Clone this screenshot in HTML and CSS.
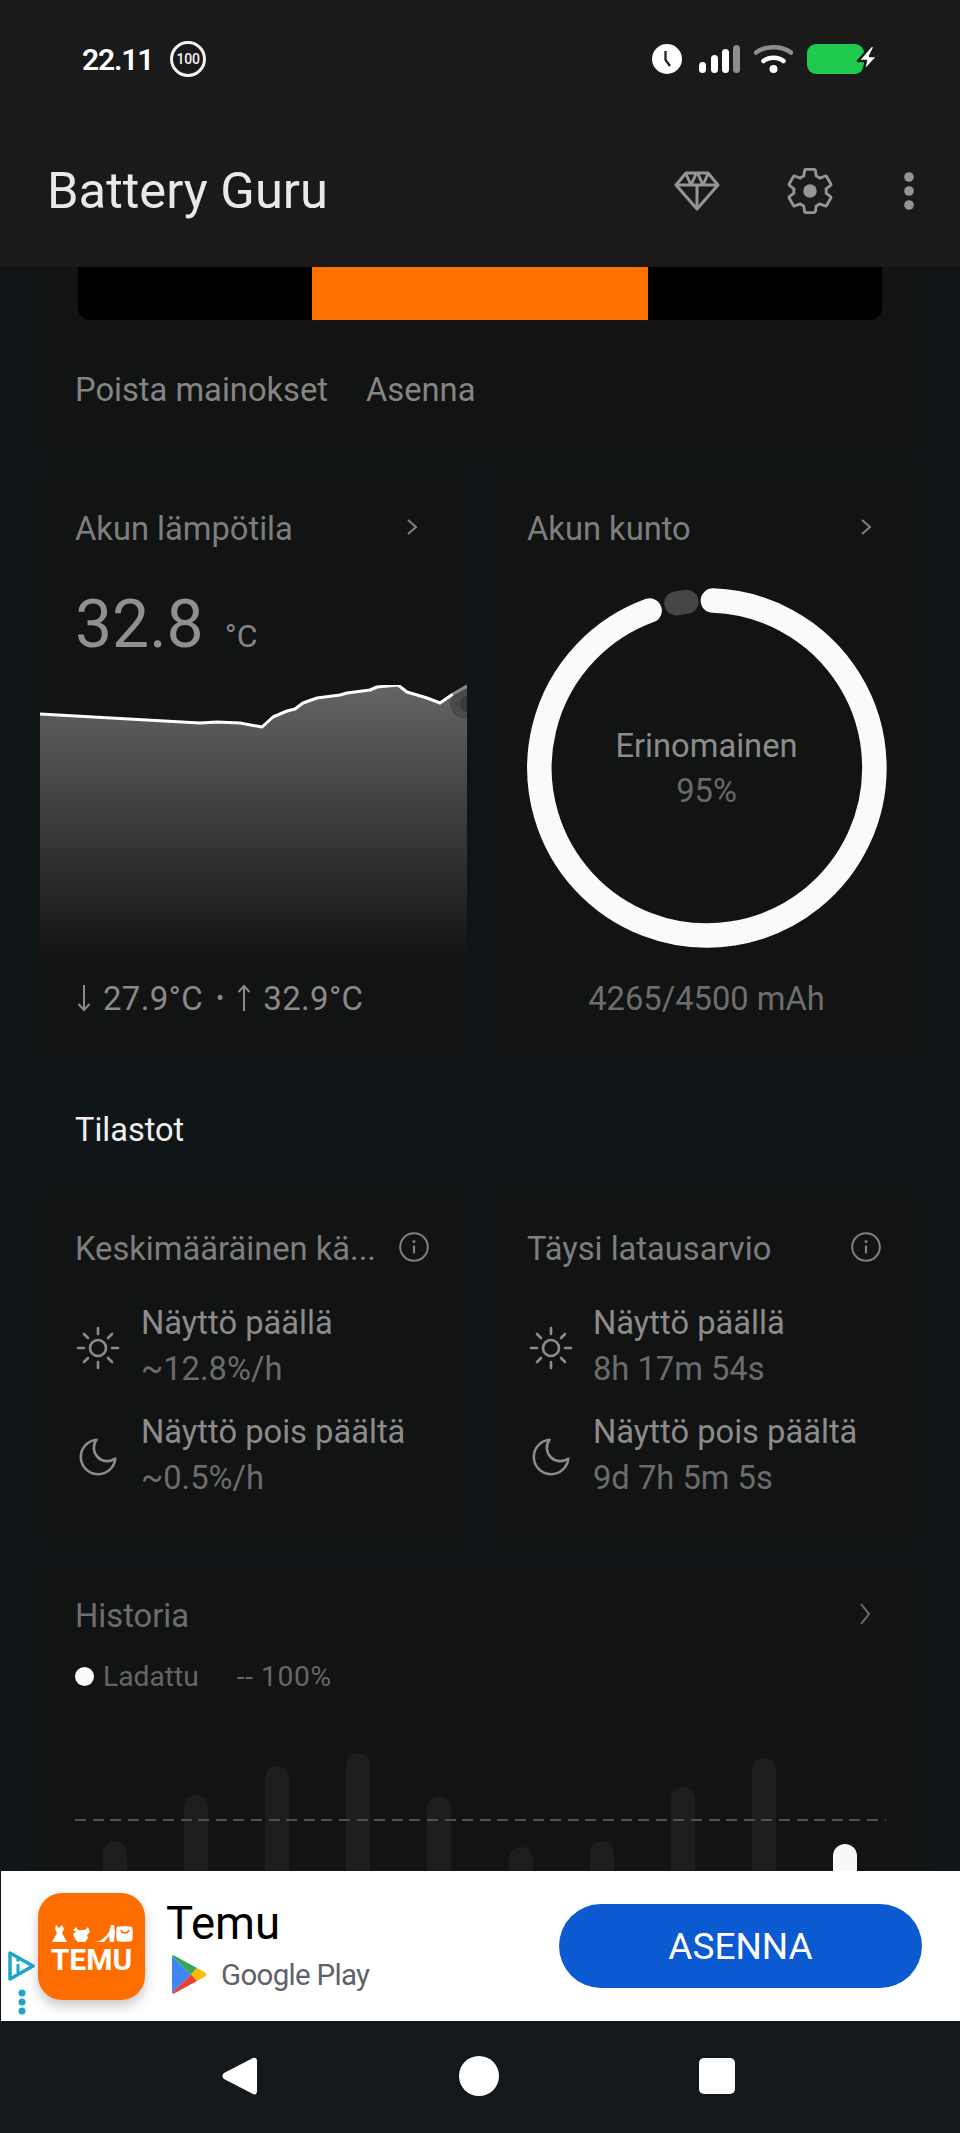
FILE: index.html
```html
<!DOCTYPE html>
<html lang="fi">
<head>
<meta charset="utf-8">
<title>Battery Guru</title>
<link rel="stylesheet" href="styles.css">
</head>
<body>
<div class="app">
  <header class="top">
    <div class="status">
      <div class="status-left">
        <span class="time">22.11</span>
        <span class="badge">100</span>
      </div>
      <div class="status-right">
        <svg class="ic-clock" width="30" height="30" viewBox="0 0 30 30"><circle cx="15" cy="15" r="15" fill="#fff"/><path d="M13.5 7v9l4.5 6" fill="none" stroke="#1a1a1a" stroke-width="2.2"/></svg>
        <svg class="ic-signal" width="41" height="28" viewBox="0 0 41 28"><rect x="0" y="17" width="7" height="11" rx="3.5" fill="#fff"/><rect x="12" y="10" width="7" height="18" rx="3.5" fill="#fff"/><rect x="23" y="4" width="7" height="24" rx="3.5" fill="#fff"/><rect x="34" y="0" width="7" height="28" rx="3.5" fill="#8e8e8e"/></svg>
        <svg class="ic-wifi" width="39" height="30" viewBox="0 0 39 30"><path d="M2 8.5C11 1.500 28 1.500 37 8.500" fill="none" stroke="#8e8e8e" stroke-width="4.500" stroke-linecap="round"/><path d="M9.500 17C14.500 12.500 24.500 12.500 29.500 17" fill="none" stroke="#fff" stroke-width="4.500" stroke-linecap="round"/><circle cx="19.500" cy="25" r="4" fill="#fff"/></svg>
        <svg class="ic-batt" width="72" height="32" viewBox="0 0 72 32"><rect x="0" y="1" width="57" height="30" rx="9" fill="#1ecb4f"/><path d="M64 3 51 18h8l-3 11 15-16h-8l5-10z" fill="#fff" stroke="#1a1a1a" stroke-width="2.500" stroke-linejoin="round"/></svg>
      </div>
    </div>
    <div class="toolbar">
      <h1 class="app-title">Battery Guru</h1>
      <div class="actions">
        <svg width="46" height="40" viewBox="0 0 46 40" fill="none" stroke="#959595" stroke-width="3" stroke-linejoin="round"><path d="M12 2h22l10 12-21 24L2 14z"/><path d="M2 14h42M17 14l5-11M29 14l-5-11M12 3l5 11M34 3l-5 11M23 14v23"/></svg>
        <svg width="54" height="54" viewBox="0 0 24 24" fill="none" stroke="#959595" stroke-width="1.250"><path d="M19.140 12.940c.04-.3.06-.61.06-.94 0-.32-.02-.64-.07-.94l2.030-1.580c.18-.14.23-.41.12-.61l-1.920-3.320c-.12-.22-.37-.29-.59-.22l-2.390.96c-.5-.38-1.030-.7-1.620-.94l-.36-2.540c-.04-.24-.24-.41-.48-.41h-3.840c-.24 0-.43.17-.47.41l-.36 2.540c-.59.24-1.130.57-1.620.94l-2.390-.96c-.22-.08-.47 0-.59.22L2.740 8.870c-.12.21-.08.47.12.61l2.030 1.580c-.05.3-.09.63-.09.94s.02.64.07.94l-2.030 1.580c-.18.14-.23.41-.12.61l1.920 3.320c.12.22.37.29.59.22l2.390-.96c.5.38 1.030.7 1.620.94l.36 2.540c.05.24.24.41.48.41h3.840c.24 0 .44-.17.47-.41l.36-2.540c.59-.24 1.130-.56 1.620-.94l2.390.96c.22.08.47 0 .59-.22l1.920-3.320c.12-.22.07-.47-.12-.61l-2.010-1.580z"/><circle cx="12" cy="12" r="3" fill="#959595" stroke="none"/></svg>
        <svg class="ic-more" width="10" height="38" viewBox="0 0 10 38" fill="#959595"><circle cx="5" cy="5" r="4.800"/><circle cx="5" cy="19" r="4.800"/><circle cx="5" cy="33" r="4.800"/></svg>
      </div>
    </div>
  </header>

  <main class="content">
    <section class="card promo">
      <div class="banner"><div class="banner-fill"></div></div>
      <div class="promo-links"><span>Poista mainokset</span><span>Asenna</span></div>
    </section>

    <div class="pair first-pair">
      <section class="card">
        <div class="card-head">
          <span class="card-title">Akun lämpötila</span>
          <svg class="chev" width="12" height="18" viewBox="0 0 12 18"><path d="M2 2l8 7-8 7" fill="none" stroke="#808080" stroke-width="2"/></svg>
        </div>
        <div class="temp"><span class="temp-num">32.8</span><span class="temp-unit">°C</span></div>
        <svg class="temp-chart" width="427" height="273" viewBox="0 0 427 273">
          <defs>
            <linearGradient id="fade" x1="0" y1="0" x2="0" y2="1"><stop offset="0" stop-color="#646464"/><stop offset="1" stop-color="#131313"/></linearGradient>
          </defs>
          <path d="M0 29L160 38L177 37L200 38L222 42L233 32L247 26L255 24L263 18L277 13L300 10L307 8L330 5L337 2L358 0L367 7L387 13L400 18L413 9L427 1V273H0z" fill="url(#fade)"/>
          <circle cx="425" cy="19" r="15" fill="#4a4a4a"/>
          <circle cx="428" cy="19" r="8" fill="#3a3a3a"/>
          <path d="M0 29L160 38L177 37L200 38L222 42L233 32L247 26L255 24L263 18L277 13L300 10L307 8L330 5L337 2L358 0L367 7L387 13L400 18L413 9" fill="none" stroke="#fff" stroke-width="3" stroke-linejoin="round"/>
          <path d="M413 9L427 1" fill="none" stroke="#8a8a8a" stroke-width="3"/>
        </svg>
        <div class="temp-range">
          <svg width="14" height="28" viewBox="0 0 14 28"><path d="M7 1v25M1.500 20L7 26l5.500-6" fill="none" stroke="#8a8a8a" stroke-width="2"/></svg>
          <span>27.9°C</span>
          <span class="sep">•</span>
          <svg width="14" height="28" viewBox="0 0 14 28"><path d="M7 27V2M1.500 8L7 2l5.500 6" fill="none" stroke="#8a8a8a" stroke-width="2"/></svg>
          <span>32.9°C</span>
        </div>
      </section>

      <section class="card">
        <div class="card-head">
          <span class="card-title">Akun kunto</span>
          <svg class="chev" width="12" height="18" viewBox="0 0 12 18"><path d="M2 2l8 7-8 7" fill="none" stroke="#808080" stroke-width="2"/></svg>
        </div>
        <div class="ring">
          <svg width="360" height="360" viewBox="0 0 360 360">
            <path d="M185.900 12.600A167.500 167.500 0 1 1 122.600 22.600" fill="none" stroke="#fafafa" stroke-width="24.500" stroke-linecap="round"/>
            <path d="M149.200 15.400A167.500 167.500 0 0 1 159.600 13.800" fill="none" stroke="#454545" stroke-width="24" stroke-linecap="round"/>
          </svg>
          <div class="ring-text">
            <span class="ring-label">Erinomainen</span>
            <span class="ring-pct">95%</span>
          </div>
        </div>
        <div class="capacity">4265/4500 mAh</div>
      </section>
    </div>

    <h2 class="section-title">Tilastot</h2>

    <div class="pair">
      <section class="card stat">
        <div class="card-head">
          <span class="card-title">Keskimääräinen kä...</span>
          <svg class="info" width="30" height="30" viewBox="0 0 30 30"><circle cx="15" cy="15" r="13.800" fill="none" stroke="#808080" stroke-width="2"/><path d="M15 13.500v8" stroke="#808080" stroke-width="2.200"/><circle cx="15" cy="9.500" r="1.500" fill="#808080"/></svg>
        </div>
        <div class="stat-row">
          <svg class="stat-ic" width="46" height="46" viewBox="0 0 46 46" fill="none" stroke="#8c8c8c" stroke-width="2.600" stroke-linecap="round"><circle cx="23" cy="23" r="8"/><path d="M23 3v6M23 37v6M3 23h6M37 23h6M9 9l4 4M33 33l4 4M9 37l4-4M33 13l4-4"/></svg>
          <div class="stat-text"><span class="stat-name">Näyttö päällä</span><span class="stat-val">~12.8%/h</span></div>
        </div>
        <div class="stat-row">
          <svg class="stat-ic" width="46" height="46" viewBox="0 0 24 24" fill="none" stroke="#8c8c8c" stroke-width="1.350" stroke-linejoin="round"><path d="M21 12.790A9 9 0 1 1 11.210 3 7 7 0 0 0 21 12.790z"/></svg>
          <div class="stat-text"><span class="stat-name">Näyttö pois päältä</span><span class="stat-val">~0.5%/h</span></div>
        </div>
      </section>

      <section class="card stat">
        <div class="card-head">
          <span class="card-title">Täysi latausarvio</span>
          <svg class="info" width="30" height="30" viewBox="0 0 30 30"><circle cx="15" cy="15" r="13.800" fill="none" stroke="#808080" stroke-width="2"/><path d="M15 13.500v8" stroke="#808080" stroke-width="2.200"/><circle cx="15" cy="9.500" r="1.500" fill="#808080"/></svg>
        </div>
        <div class="stat-row">
          <svg class="stat-ic" width="46" height="46" viewBox="0 0 46 46" fill="none" stroke="#8c8c8c" stroke-width="2.600" stroke-linecap="round"><circle cx="23" cy="23" r="8"/><path d="M23 3v6M23 37v6M3 23h6M37 23h6M9 9l4 4M33 33l4 4M9 37l4-4M33 13l4-4"/></svg>
          <div class="stat-text"><span class="stat-name">Näyttö päällä</span><span class="stat-val">8h 17m 54s</span></div>
        </div>
        <div class="stat-row">
          <svg class="stat-ic" width="46" height="46" viewBox="0 0 24 24" fill="none" stroke="#8c8c8c" stroke-width="1.350" stroke-linejoin="round"><path d="M21 12.790A9 9 0 1 1 11.210 3 7 7 0 0 0 21 12.790z"/></svg>
          <div class="stat-text"><span class="stat-name">Näyttö pois päältä</span><span class="stat-val">9d 7h 5m 5s</span></div>
        </div>
      </section>
    </div>

    <section class="card history">
      <div class="card-head hist-head">
        <span class="card-title">Historia</span>
        <svg class="chev" width="12" height="24" viewBox="0 0 12 24"><path d="M2 2l8 10-8 10" fill="none" stroke="#6e6e6e" stroke-width="2"/></svg>
      </div>
      <div class="legend"><span class="legend-dot"></span><span class="legend-name">Ladattu</span><span class="legend-val">-- 100%</span></div>
      <div class="bars">
        <div class="bar" style="height:89px"></div>
        <div class="bar" style="height:135px"></div>
        <div class="bar" style="height:164px"></div>
        <div class="bar" style="height:177px"></div>
        <div class="bar" style="height:134px"></div>
        <div class="bar" style="height:83px"></div>
        <div class="bar" style="height:89px"></div>
        <div class="bar" style="height:143px"></div>
        <div class="bar" style="height:172px"></div>
        <div class="bar bar-now" style="height:86px"></div>
        <div class="dash"></div>
      </div>
    </section>
  </main>

  <aside class="ad">
    <div class="ad-choices">
      <svg width="28" height="30" viewBox="0 0 28 30"><path d="M2 2l23 13L2 28z" fill="#fff" stroke="#1ca6c9" stroke-width="3.500" stroke-linejoin="round"/><path d="M10 13v9" stroke="#1ca6c9" stroke-width="3"/><circle cx="10" cy="9" r="1.800" fill="#1ca6c9"/></svg>
      <svg width="8" height="26" viewBox="0 0 8 26" fill="#1ca6c9"><circle cx="4" cy="4" r="3.500"/><circle cx="4" cy="13" r="3.500"/><circle cx="4" cy="22" r="3.500"/></svg>
    </div>
    <div class="temu-icon">
      <svg width="82" height="20" viewBox="0 0 82 20" fill="#fff"><path d="M5 1l3 3 3-3 2 4-2 4 5 9H1l5-9-2-4z"/><path d="M22 6l3-3 2 3h7l3-3 2 5-3 3 1 3-3 4H27l-3-3-2-5 3-2z"/><path d="M43 18c6 0 11-4 15-10l2-7h3l1 7-1 10h-4l-1-6-5 6z"/><path d="M66 3c1-1 14-1 15 0 1 2 1 12 0 14-1 1-14 1-15 0-1-2-1-12 0-14z"/><path d="M70 6c1 4 7 4 8 0" fill="none" stroke="#ff6d00" stroke-width="1.500"/></svg>
      <span class="temu-word">TEMU</span>
    </div>
    <div class="ad-info">
      <span class="ad-name">Temu</span>
      <div class="ad-store">
        <svg width="36" height="39" viewBox="0 0 36 39"><path d="M1 1v37l19-18.500z" fill="#4285f4"/><path d="M1 1c1-1 2-1 3 0l22 12-6 6.500z" fill="#34a853"/><path d="M26 13l8 4.500c2 1 2 3 0 4L26 26l-6-6.500z" fill="#fbbc04"/><path d="M1 38c1 1 2 1 3 0l22-12-6-6.500z" fill="#ea4335"/></svg>
        <span class="store-name">Google Play</span>
      </div>
    </div>
    <div class="ad-cta">ASENNA</div>
  </aside>

  <nav class="navbar">
    <svg width="38" height="40" viewBox="0 0 38 40"><path d="M32 2c2-1 4 0 4 3v30c0 3-2 4-4 3L3 23c-2-1.500-2-4.500 0-6z" fill="#fff"/></svg>
    <svg width="40" height="40" viewBox="0 0 40 40"><circle cx="20" cy="20" r="20" fill="#fff"/></svg>
    <svg width="36" height="36" viewBox="0 0 36 36"><rect width="36" height="36" rx="5" fill="#fff"/></svg>
  </nav>
</div>
</body>
</html>
```

FILE: styles.css
```css
* { box-sizing: border-box; }
html, body { margin: 0; padding: 0; }
body { width: 960px; height: 2133px; background: #101618; font-family: Roboto, "Liberation Sans", sans-serif; overflow: hidden; }
.app { display: flex; flex-direction: column; height: 2133px; }

.top { flex: none; height: 267px; background: #1a1a1a; position: relative; z-index: 2; }
.status { height: 118px; display: flex; justify-content: space-between; align-items: center; padding: 0 81px 0 82px; }
.status-left { display: flex; align-items: center; gap: 17px; }
.time { color: #fff; font-size: 30px; font-weight: 600; letter-spacing: -1.200px; }
.badge { width: 36px; height: 36px; border: 3px solid #f2f2f2; border-radius: 50%; color: #f2f2f2; font-size: 14px; font-weight: 500; display: flex; align-items: center; justify-content: center; letter-spacing: -.3px; }
.status-right { display: flex; align-items: center; gap: 14px; }
.ic-clock { margin-right: 3px; }
.toolbar { height: 149px; display: flex; justify-content: space-between; align-items: center; padding: 0 46px 4px 47px; }
.app-title { margin: 0; color: #e9e9e9; font-size: 50.700px; font-weight: 400; }
.actions { display: flex; align-items: center; gap: 63px; }
.ic-more { margin-left: 4px; }

.content { flex: 1; min-height: 0; overflow: hidden; padding: 0 38px; }
.card { background: #121313; box-shadow: 0 0 6px #121313; }
.promo { padding: 0 0 45px; }
.banner { margin: 0 40px; height: 53px; background: #000; border-radius: 0 0 12px 12px; display: flex; justify-content: center; }
.banner-fill { width: 336px; background: #ff7200; }
.promo-links { display: flex; gap: 38px; padding: 50px 0 0 37px; color: #858585; font-size: 32.700px; line-height: 40px; }

.pair { display: grid; grid-template-columns: 427px 433px; gap: 23px; margin-left: 2px; }
.first-pair { margin-top: 15px; }
.first-pair .card { padding-top: 40px; padding-bottom: 37px; }
.card-head { display: flex; justify-content: space-between; align-items: center; height: 38px; padding: 0 49px 0 35px; }
.card-head svg { margin-bottom: 4px; }
.card:nth-child(2) .card-head { padding-left: 37px; padding-right: 51px; }
.card-title { color: #7e7e7e; font-size: 32.700px; line-height: 38px; white-space: nowrap; }

.temp { height: 70px; margin-top: 42px; padding-left: 35px; display: flex; align-items: baseline; color: #909090; }
.temp-num { font-size: 66px; line-height: 70px; }
.temp-unit { font-size: 32px; margin-left: 21px; color: #858585; }
.temp-chart { display: block; margin-top: 25px; }
.temp-range { display: flex; align-items: center; height: 38px; margin-top: 21px; padding-left: 37px; color: #8a8a8a; font-size: 33px; letter-spacing: .3px; gap: 12px; }
.sep { font-size: 24px; margin: 0 1px; }

.ring { display: grid; justify-items: center; align-items: center; margin-top: 40px; }
.ring > svg, .ring-text { grid-area: 1 / 1; }
.ring-text { display: flex; flex-direction: column; align-items: center; margin-top: 2px; }
.ring-label { color: #8c8c8c; font-size: 32.700px; line-height: 45px; }
.ring-pct { color: #6a6a6a; font-size: 32.700px; line-height: 45px; }
.capacity { text-align: center; color: #6e6e6e; font-size: 32.700px; line-height: 38px; margin-top: 32px; }

.section-title { margin: 56px 0 42px 37px; color: #f0f0f0; font-size: 32.500px; line-height: 38px; font-weight: 400; }

.stat { padding: 39px 0 43px 0; }
.stat .card-head { padding-right: 38px; }
.pair .stat:nth-child(2) .card-head { padding-left: 37px; padding-right: 42px; }
.stat-row { display: flex; align-items: center; gap: 20px; padding-left: 35px; margin-top: 33px; }
.stat-row + .stat-row { margin-top: 18px; }
.pair .stat:nth-child(2) .stat-row { padding-left: 38px; gap: 19px; }
.stat-ic { flex: none; margin-top: 2px; }
.stat-text { display: flex; flex-direction: column; }
.stat-name { color: #8c8c8c; font-size: 32.700px; line-height: 45.500px; }
.stat-val { color: #6c6c6c; font-size: 32.700px; line-height: 45.500px; }

.history { margin-top: 21px; padding: 32px 36px 0 37px; height: 500px; }
.card.history .hist-head { padding: 0 15px 0 0; }
.hist-head .card-title { color: #6e6e6e; }
.legend { display: flex; align-items: center; margin-top: 24px; height: 34px; color: #666; font-size: 28.200px; }
.legend-dot { width: 19px; height: 19px; border-radius: 50%; background: #fafafa; margin-right: 9px; }
.legend-name { margin-right: 38px; }
.legend-val { letter-spacing: .6px; }
.bars { position: relative; height: 237px; display: flex; justify-content: space-between; align-items: flex-end; padding: 0 29px 0 28px; }
.bar { width: 24px; border-radius: 12px 12px 0 0; background: #1e1e1e; }
.bar-now { background: #f8f8f8; }
.dash { position: absolute; left: 0; right: 0; top: 126px; height: 2px; background: repeating-linear-gradient(90deg, #505050 0 11px, transparent 11px 17.600px); }

.ad { flex: none; height: 150px; margin-left: 1px; background: #fff; display: flex; align-items: center; position: relative; padding-right: 38px; }
.ad-choices { position: absolute; left: 7px; top: 80px; display: flex; flex-direction: column; align-items: center; gap: 8px; }
.temu-icon { flex: none; margin-left: 37px; width: 107px; height: 107px; border-radius: 24px; background: #ff6d00; box-shadow: 0 6px 12px rgba(0,0,0,.22); display: flex; flex-direction: column; align-items: center; padding-top: 31px; z-index: 1; }
.temu-word { color: #fff; font-size: 30px; font-weight: 700; line-height: 28px; margin-top: 2px; }
.ad-info { flex: 1; display: flex; flex-direction: column; margin-left: 21px; }
.ad-name { color: #000; font-size: 45.500px; line-height: 52px; }
.ad-store { display: flex; align-items: center; gap: 14px; margin-left: 5px; margin-top: 5px; }
.store-name { color: #5f6368; font-size: 29.500px; letter-spacing: -.7px; }
.ad-cta { flex: none; width: 363px; height: 84px; border-radius: 42px; background: #0c5ad2; color: #fff; font-size: 37px; display: flex; align-items: center; justify-content: center; }

.navbar { flex: none; height: 112px; background: #14181a; display: flex; align-items: center; padding: 0 225px 2px 221px; justify-content: space-between; }
```
